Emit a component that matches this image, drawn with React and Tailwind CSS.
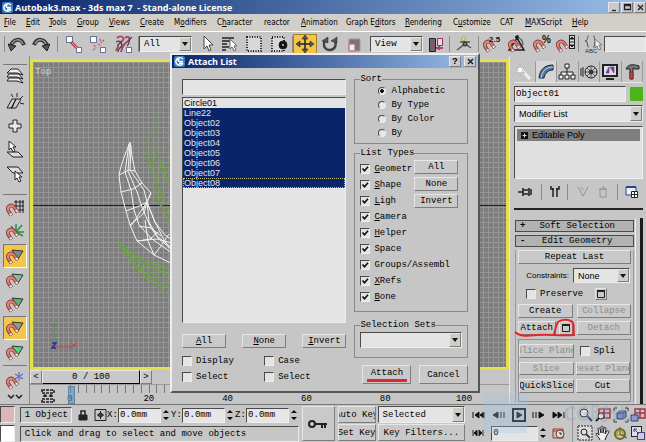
import React from 'react';
import clsx from 'clsx';

const mono = "font-['Liberation_Mono',monospace] text-[9px] leading-[12px]";
const raised = 'border border-t-[#e6e6e6] border-l-[#e6e6e6] border-b-[#7d7d7d] border-r-[#7d7d7d]';
const sunken = 'border border-t-[#4a4a4a] border-l-[#4a4a4a] border-b-[#ededed] border-r-[#ededed]';

const Btn = ({ children, className, disabled, label }) => (
  <button
    aria-label={label}
    disabled={disabled}
    className={clsx('flex items-center justify-center overflow-hidden whitespace-nowrap bg-[#c9c9c9]', raised, disabled && 'text-[#8c8c8c]', className)}
  >
    {children}
  </button>
);

const Field = ({ label, className, value = '' }) => (
  <input aria-label={label} defaultValue={value} className={clsx('min-w-0 bg-[#e4e4e4] px-px outline-none', sunken, className)} />
);

const Select = ({ label, options, className }) => (
  <div className={clsx('relative flex bg-[#e4e4e4]', sunken, className)}>
    <select aria-label={label} className="w-full appearance-none bg-transparent pl-1 pr-3 outline-none">
      {options.map((o) => <option key={o}>{o}</option>)}
    </select>
    <span className={clsx('pointer-events-none absolute inset-y-0 right-0 flex w-3 items-center justify-center bg-[#cfcdc8]', raised)}>
      <svg width="6" height="4" viewBox="0 0 6 4"><path d="M0 0h6L3 4z" fill="#111" /></svg>
    </span>
  </div>
);

const Check = ({ children, checked, hot, className }) => (
  <label className={clsx('flex items-center gap-1', className)}>
    <span className="relative flex h-[10px] w-[10px] shrink-0">
      <input type="checkbox" defaultChecked={checked} className={clsx('peer h-[10px] w-[10px] appearance-none bg-[#e4e4e4]', sunken)} />
      <svg className="pointer-events-none absolute inset-0 hidden peer-checked:block" width="10" height="10" viewBox="0 0 10 10">
        <path d="M2.5 4.5l2 2.2L8 2.8" fill="none" stroke="#111" strokeWidth="1.7" />
      </svg>
    </span>
    <span className="block overflow-hidden whitespace-nowrap">{hot ? <Hot text={children} at={0} /> : children}</span>
  </label>
);

// underlined accelerator letter
const Hot = ({ text, at }) => (
  <span>{text.slice(0, at)}<u className="underline-offset-1">{text[at]}</u>{text.slice(at + 1)}</span>
);

const Icon = ({ w = 18, h = 18, children, className }) => (
  <svg width={w} height={h} viewBox={`0 0 ${w} ${h}`} fill="none" stroke="#222" className={clsx('shrink-0', className)}>{children}</svg>
);

const Logo = () => (
  <svg width="11" height="11" viewBox="0 0 11 11" className="shrink-0">
    <rect width="11" height="11" rx="2" fill="#3c7dbb" />
    <path d="M9 3C7 .8 2 1.200 1.800 5.500 2 9.500 7.500 10.300 9.200 7.500M9 5.500H5.500c-2-.2-2-2.300 0-2.300M5 7.300h4" fill="none" stroke="#fff" strokeWidth="1.400" />
  </svg>
);

const Magnet = ({ x = 0, y = 0 }) => (
  <g transform={`translate(${x} ${y})`} fill="none">
    <path d="M5.500 12.500L2.500 8C0 3.500 5.500 .5 8 4l3.500 5" stroke="#6a3430" strokeWidth="3.600" />
    <path d="M5.200 12L2.500 8C0 3.500 5.500 .5 8 4l3.200 4.500" stroke="#dc7268" strokeWidth="2.200" />
    <path d="M2 7C1 4 4.500 2 6.500 3.500" stroke="#efb0a6" strokeWidth=".8" />
    <path d="M4.300 10.700l1 1.400M10.200 7.200l1 1.400" stroke="#f2f2f2" strokeWidth="2.400" />
  </g>
);

const Sep = () => <span className="h-4 w-px shrink-0 bg-[#8b8b8b]" />;

const TitleBar = () => (
  <header className="flex h-[14px] items-center gap-[2px] bg-linear-to-r from-[#0a246a] to-[#9cbfe8] pl-[2px]">
    <Logo />
    <h1 className="grow whitespace-pre font-['Open_Sans',sans-serif] text-[9px] font-bold leading-[13px] text-white">
      {'Autobak3.max - 3ds max 7  - Stand-alone License'}
    </h1>
    <div className="flex gap-px">
      {['M2 7.500h4', 'M1.500 1.500h6v5h-6zM1.500 2.500h6', 'M2 2l5 5M7 2L2 7'].map((d, i) => (
        <Btn key={d} label={['Minimize', 'Maximize', 'Close'][i]} className="h-[11px] w-3">
          <Icon w={9} h={9}><path d={d} strokeWidth="1.300" /></Icon>
        </Btn>
      ))}
    </div>
  </header>
);

const menus = [
  ['File', 0, 'w-[22px]'], ['Edit', 0, 'w-[23px]'], ['Tools', 0, 'w-[28px]'], ['Group', 0, 'w-[32px]'], ['Views', 0, 'w-[31px]'],
  ['Create', 0, 'w-[34px]'], ['Modifiers', 1, 'w-[43px]'], ['Character', 1, 'w-[47px]'], ['reactor', -1, 'w-[37px]'], ['Animation', 0, 'w-[45px]'],
  ['Graph Editors', 7, 'w-[59px]'], ['Rendering', 0, 'w-[48px]'], ['Customize', 1, 'w-[47px]'], ['CAT', -1, 'w-[25px]'], ['MAXScript', 0, 'w-[47px]'], ['Help', 0, 'w-[22px]'],
];

const MenuBar = () => (
  <nav className="flex h-[17px] items-center bg-[#d2cfc9] pl-1 font-['DejaVu_Sans_Condensed','DejaVu_Sans',sans-serif] text-[8px] leading-[12px]">
    {menus.map(([name, at, w]) => (
      <button key={name} className={clsx('shrink-0 whitespace-nowrap text-left', w)}>
        {at < 0 ? name : <Hot text={name} at={at} />}
      </button>
    ))}
  </nav>
);

const Tool = ({ label, children, className }) => (
  <button aria-label={label} className={clsx('flex h-5 shrink-0 items-center justify-center', className)}>{children}</button>
);

const Toolbar = () => (
  <div className={clsx('flex h-[25px] items-center border-t border-white bg-[#c6c6c6] pl-1', mono)}>
    <Sep />
    <Tool label="Undo" className="w-6"><Icon><path d="M3 11C5 4 13 2 16 10" stroke="#333" strokeWidth="4" /><path d="M4 9C6 4 12 3 15 9" stroke="#999" strokeWidth="1.500" /><path d="M0 9l8 2-5 5z" fill="#555" /></Icon></Tool>
    <Tool label="Redo" className="w-6"><Icon><path d="M15 11C13 4 5 2 2 10" stroke="#333" strokeWidth="4" /><path d="M14 9C12 4 6 3 3 9" stroke="#999" strokeWidth="1.500" /><path d="M18 9l-8 2 5 5z" fill="#555" /></Icon></Tool>
    <span className="w-1" /><Sep />
    <Tool label="Link" className="ml-1 w-6">
      <Icon><rect x="1.500" y="1.500" width="6" height="6" fill="#fff" stroke="#679" /><rect x="11.500" y="12.500" width="5" height="5" fill="#fff" stroke="#679" /><path d="M6 7l3 3M8 9l4 4" stroke="#b0404c" strokeWidth="3" /><path d="M7 8l5 5" stroke="#e0a0a0" /></Icon>
    </Tool>
    <Tool label="Unlink" className="w-6">
      <Icon><rect x="1.500" y="1.500" width="6" height="6" fill="#fff" stroke="#679" /><rect x="11.500" y="12.500" width="5" height="5" fill="#fff" stroke="#679" /><path d="M5 10l2 3M4 15l3-2M11 4l1 3M15 5l-3 3M9 9l3 2" stroke="#c06068" strokeWidth="1.500" strokeDasharray="2 1" /></Icon>
    </Tool>
    <Tool label="Bind to Space Warp" className="w-7">
      <Icon><path d="M2 3c3-3 8-1 6 2S2 8 3 12l-2 4M10 3c4-3 6 1 3 3s-6 5-7 11" stroke="#b03c50" strokeWidth="1.800" /><path d="M1 7c5-3 7 3 5 5s-3 2-3 5M17 2c-5 3-1 6-5 9" stroke="#33406c" strokeWidth="1.300" /><rect x="11.500" y="12.500" width="5" height="5" fill="#fff" stroke="#679" /></Icon>
    </Tool>
    <Sep />
    <Select label="Selection filter" options={['All']} className="h-4 w-[53px]" />
    <Tool label="Select" className="ml-1 w-[22px]"><Icon w={12}><path d="M3 1v13l3-3 2 5 2-1-2-5h4z" fill="#fff" stroke="#444" /></Icon></Tool>
    <Tool label="Select by Name" className="w-6"><Icon><path d="M1 3h12M1 6h8M1 9h5M1 12h7M1 15h4" strokeWidth="1.500" /><path d="M9 4v10l2-2 2 4 2-1-2-4h3z" fill="#fff" stroke="#666" /></Icon></Tool>
    <Tool label="Region" className="w-6"><Icon><rect x="2" y="2" width="14" height="14" fill="#d8d8d8" strokeWidth="2" strokeDasharray="1 1.500" /></Icon></Tool>
    <Tool label="Window Crossing" className="w-[26px]"><Icon><rect x="2" y="2" width="12" height="14" fill="#d8d8d8" strokeWidth="2" strokeDasharray="1 1.500" /><circle cx="13" cy="10" r="4" fill="#111" /><circle cx="13" cy="10" r="1" fill="#ccc" stroke="none" /></Icon></Tool>
    <Sep />
    <Tool label="Move" className="w-6 border border-[#a08020] bg-[#f3c648]">
      <Icon><path d="M9 3v12M3 9h12" strokeWidth="1.500" /><path d="M9 0l3 4H6zM9 18l3-4H6zM0 9l4-3v6zM18 9l-4-3v6z" fill="#555" strokeWidth=".6" /></Icon>
    </Tool>
    <Tool label="Rotate" className="w-[25px]"><Icon><path d="M4 5C1 12 5 15 9 15s8-5 4-10" stroke="#444" strokeWidth="2.500" /><path d="M1 6l6-4v6zM10 6l6-4v6z" fill="#555" strokeWidth=".5" /></Icon></Tool>
    <Tool label="Scale" className="w-6"><Icon><path d="M4 4h11v12H4z" fill="#777" stroke="#999" /><path d="M4 9h6v7H4z" fill="#f4e8ea" stroke="#b06070" /></Icon></Tool>
    <Select label="Reference coordinate system" options={['View']} className="ml-1 h-4 w-[53px]" />
    <Tool label="Pivot center" className="w-[26px]"><Icon><path d="M2.500 3.500h6v13h-6z" fill="#667" /><path d="M10.500 3.500h5v7h-5z" fill="#dde" stroke="#a03050" /><path d="M4 10h4M9 13h7M12 11v4" stroke="#b04060" strokeWidth="2" /></Icon></Tool>
    <Sep />
    <Tool label="Manipulate" className="w-7"><Icon><path d="M2 15l8-6 6 4M10 9l-2-5M5 7h10" stroke="#555" strokeWidth="1.500" /><path d="M6 3l3-2 2 3-3 2z" fill="#f0dc40" stroke="#aa8" /><circle cx="10" cy="9" r="2" fill="#777" /></Icon></Tool>
    <Sep />
    <Tool label="Snap 2.5" className="w-[25px]"><Icon w={20}><Magnet x={1} y={4} /><text x="7" y="7" fontSize="8" fontWeight="bold" fill="#111" stroke="none" fontFamily="Liberation Sans">2.5</text></Icon></Tool>
    <Tool label="Angle snap" className="w-[25px]"><Icon w={20}><path d="M2 15h15L10 3z" strokeWidth="1.500" /><path d="M9 2c5 0 7 5 7 8" /><path d="M8 2l3-2v5z" fill="#111" /><Magnet x={1} y={4} /></Icon></Tool>
    <Tool label="Percent snap" className="w-[25px]"><Icon w={20}><Magnet x={1} y={4} /><text x="10" y="8" fontSize="10" fontWeight="bold" fill="#111" stroke="none" fontFamily="Liberation Sans">%</text></Icon></Tool>
    <Tool label="Spinner snap" className="w-[24px]"><Icon w={20}><Magnet x={0} y={4} /><rect x="13.500" y=".5" width="5" height="13" fill="#ddd" /><path d="M14 7h5M14 4l2-2 2 2zM14 10l2 2 2-2z" fill="#111" /></Icon></Tool>
    <Sep />
    <Tool label="Named selection sets" className="ml-1 w-5"><Icon><path d="M5 1C2 1 5 6 1 6c4 0 1 6 4 6M9 1c3 0 0 5 3 5-3 0 0 6-3 6" stroke="#555" /><path d="M11 4v9l2-2 2 4 2-1-2-4h3z" fill="#eee" stroke="#777" /><text x="1" y="18" fontSize="6" fill="#333" stroke="none" fontFamily="Liberation Sans">ABC</text></Icon></Tool>
    <Field label="Selection set name" className="ml-px h-4 w-4 grow" />
  </div>
);

const SnapTool = ({ label, active, color }) => (
  <button aria-label={label} className={clsx('flex h-6 w-6 items-center justify-center', active && 'border border-t-[#777] border-l-[#777] border-b-white border-r-white bg-[#f5c64c]')}>
    <Icon>
      <path d="M6 3l11 1-5 8z" fill={color} stroke="#2c3a34" />
      <Magnet x={0} y={4} />
    </Icon>
  </button>
);

const LeftTools = () => (
  <aside className="flex w-[30px] shrink-0 flex-col items-center border-r border-[#8a8a8a] bg-[#c6c6c6] pt-2">
    <span className="h-px w-6 bg-[#777]" />
    <button aria-label="Layers" className="flex h-6 items-center"><Icon><path d="M1 14h10l6 2-4-5H3zM1 10h10l6 2-4-5H3zM1 6h10l6 2-5-6H5z" fill="#eee" transform="translate(0 -1)" /></Icon></button>
    <button aria-label="Layer properties" className="flex h-[25px] items-center"><Icon><path d="M1 15l5-9h4l-4 9zM5 15l5-9h5l-5 9z" fill="#ccc" /><path d="M5 1l2 3M11 0v4M17 3l-3 3M14 10l4 1" /></Icon></button>
    <button aria-label="Add" className="flex h-6 items-center"><Icon><path d="M7 3h4v4h4v4h-4v4H7v-4H3V7h4z" fill="#e8e8e8" /></Icon></button>
    <button aria-label="Select from layer" className="flex h-6 items-center"><Icon><path d="M1 11h11l5 5H7z" fill="#ddd" /><path d="M3 0v9l2-2 2 4 2-1-2-4h3z" fill="#fff" /></Icon></button>
    <button aria-label="Move to layer" className="flex h-6 items-center"><Icon><path d="M1 2h11l5 6H7z" fill="#ddd" /><path d="M9 6v9l2-2 2 4 2-1-2-4h3z" fill="#fff" /></Icon></button>
    <span className="mt-2 h-px w-6 bg-[#777]" />
    <button aria-label="Grid snap" className="mt-px flex h-6 items-center"><Icon><path d="M8 3h10M7 7h11M8 11h10M10 1v13M14 1v13M17 1v13" /><Magnet x={0} y={4} /></Icon></button>
    <button aria-label="Pivot snap" className="flex h-6 items-center"><Icon><path d="M10 9V1M10 9L5 3M10 9l6-7M10 9h8M10 9l7 4" stroke="#2c8c4c" strokeWidth="1.500" /><Magnet x={0} y={4} /></Icon></button>
    <SnapTool label="Vertex snap" active color="#7c8c88" />
    <SnapTool label="Endpoint snap" color="#90b8a0" />
    <SnapTool label="Midpoint snap" color="#60b080" />
    <SnapTool label="Edge snap" active color="#8aa088" />
    <SnapTool label="Face snap" color="#50d880" />
    <span className="mt-px h-px w-6 bg-[#777]" />
    <button aria-label="Freeze snap" className="flex h-7 items-center"><Icon><path d="M13 1v9M9 3l8 5M17 3L9 8" stroke="#6a70c8" strokeWidth="1.300" /><Magnet x={0} y={5} /></Icon></button>
    <Icon w={16} h={5}><path d="M1 1l3 3 3-3M9 1l3 3 3-3" strokeWidth="1.500" /></Icon>
  </aside>
);

const Viewport = () => (
  <div className="relative grow overflow-hidden border-[3px] border-[#e3e04a] bg-[#7d7d7d] bg-[linear-gradient(#969696_1px,transparent_1px),linear-gradient(90deg,#969696_1px,transparent_1px)] bg-size-[5px_5px]">
    <span className={clsx('ml-[2px] mt-1 block text-[#d0d0d0]', mono)}>Top</span>
    <span className="absolute inset-x-0 top-[143px] h-px bg-[#222]" />
    <svg width="140" height="306" viewBox="33 62 140 306" className="absolute left-0 top-0" fill="none">
      <g stroke="#69a53c" strokeDasharray="3 2">
        <path d="M172 100c-18 14-29 40-27 62M172 108c-14 12-24 34-23 58M172 124c-12 10-18 25-18 45M172 142c-8 8-13 18-12 32M172 160c-5 5-8 12-7 22" />
        <path d="M151 152l10 45M148 160l22 52M156 150l16 40M152 185l20 40M160 165l12 25M156 196l16 34" strokeWidth="1.500" />
        <path d="M119 241c10 22 28 40 53 56M119 243c14 14 32 25 53 33M121 247c13 21 30 32 51 41M124 247c14 10 30 19 48 21" strokeWidth="2" />
        <path d="M128 252l6 14M135 256l10 19M145 262l8 22M155 266l6 22M164 270l4 22M136 262l34 8M140 268l32 15" />
      </g>
      <g stroke="#f2f2f2">
        <path d="M130 142c-5 13-9 22-11 33l2 17 5 19 4 14 7 16 17 14 19 9" />
        <path d="M130 142l2 14 3 15 7 12 9 10-4 9 2 20 8 14 15 12" />
        <path d="M129 144l-4 28 6 18 3 20 5 15 13 14 20 14M130 144l-2 27 9 21 6 18 8 18 7 10 14 12M131 145l-1 25 14 20 3 12 8 20 9 12 8 6" />
        <path d="M119 175l10-5 6 1M121 192l12-3 9-6M126 211l13-5 8-4M130 225l14-12 3-11M137 241l13-2 8-7M154 255l7-9 8-12M147 202l7 18 10 20 8 11M147 202l-16 24M151 193l-8 17M137 241l20-2 15 4" />
        <path d="M139 226l12 2 10 8M145 220l3 21 6 14" />
      </g>
      <path d="M54 345v-20M51 326l3-2 3 2" stroke="#3e9a48" />
      <path d="M54 347h20M71 342l6 6M77 342l-6 6" stroke="#c0483c" />
      <path d="M52 343h4l-4 5h4" stroke="#2a2a9c" strokeWidth="1.500" />
    </svg>
  </div>
);

const TimeLine = () => (
  <div className={clsx('h-[34px] bg-[#c6c6c6]', mono)}>
    <div className="flex h-[14px] w-[122px]">
      <Btn label="Previous frame" className="w-3">&lt;</Btn>
      <Btn className="grow border-b-black border-r-black text-[9px]">0 / 100</Btn>
      <Btn label="Next frame" className="w-3">&gt;</Btn>
    </div>
    <div className="flex h-5 border-t border-[#999]">
      <div className="flex w-10 justify-center pt-1 pr-1">
        <Icon w={14} h={14}><path d="M1 1h12v3H1zM1 13h12v-3H1z" strokeDasharray="3 1" strokeWidth="1.500" /><path d="M4 5v3M10 5v3M2 7h4M8 7h4" strokeWidth="1.500" /></Icon>
      </div>
      <div className="relative mr-[45px] grow">
        <div className="flex justify-between">
          {Array.from({ length: 51 }, (_, i) => <span key={i} className="h-[8px] w-px bg-[#777]" />)}
        </div>
        <div className="flex justify-between text-[9px]">
          {[0, 20, 40, 60, 80, 100].map((n) => <span key={n} className="flex w-0 justify-center leading-[12px]">{n}</span>)}
        </div>
        <span className="absolute -left-[2px] top-px h-[18px] w-[7px] border border-[#5d86a8] bg-[#5b93c0]/60" />
      </div>
    </div>
  </div>
);

const tabIcons = [
  ['Create', <><path d="M7 7l8 9" stroke="#eee" strokeWidth="3" /><path d="M5 1l1 4 4-1-3 3 3 3-4-1-1 4-1-4-4 1 3-3L1 4l3 1z" fill="#fff" stroke="#bbb" /></>],
  ['Modify', <><path d="M2 15C3 6 8 2 16 2v5C11 7 8 10 7 15z" fill="#4a78a8" /><path d="M4 15C5 8 9 4 16 4" stroke="#cde" /></>],
  ['Hierarchy', <><path d="M7 1h4v4H7zM1 12h4v4H1zM7 12h4v4H7zM13 12h4v4h-4zM9 5v7M3 12V9h12v3" fill="#eee" /></>],
  ['Motion', <><circle cx="11" cy="9" r="6" /><circle cx="11" cy="9" r="2" fill="#999" /><path d="M11 3v12M5 9h12M7 5l8 8M15 5l-8 8" strokeWidth=".6" /><path d="M1 5v8M3 4v10" /></>],
  ['Display', <><rect x="2" y="2" width="14" height="11" fill="#dde" strokeWidth="2" /><path d="M5 10l3-6v6zM9 4h4v6z" fill="#bb3040" stroke="#4050a0" strokeWidth=".7" /><path d="M5 16h8" strokeWidth="2" /></>],
  ['Utilities', <><path d="M3 6c2-5 7-5 13-3v3h-4l-2-1v11H7V6z" fill="#777" /><path d="M7 9h3v7H7z" fill="#c04838" stroke="#733" /></>],
];

const WinIcon = () => <Icon w={8} h={8}><path d="M.5 1.500h7v6h-7z" /><path d="M0 1h8" strokeWidth="2" /></Icon>;

const CommandPanel = () => (
  <aside className={clsx('flex w-[137px] shrink-0 flex-col border-l border-[#e8e8e8] bg-[#c6c6c6] pl-1 pr-[3px] pt-[5px]', mono)}>
    <div className="flex h-[22px] items-center justify-between border-b border-[#e8e8e8]">
      {tabIcons.map(([name, art], i) => (
        <button key={name} aria-label={name} className={clsx('flex h-[21px] grow items-center justify-center border-r border-[#999]', i === 1 && 'bg-[#d6d6d6]')}>
          <Icon>{art}</Icon>
        </button>
      ))}
    </div>
    <div className="mt-[3px] flex items-center gap-1">
      <Field label="Object name" value="Object01" className="h-4 grow" />
      <button aria-label="Object color" className="h-[14px] w-[14px] bg-[#4cb318]" />
    </div>
    <Select label="Modifier List" options={['Modifier List']} className="mt-[3px] h-[17px] font-['Liberation_Sans',sans-serif]" />
    <ul className={clsx("mt-1 h-[53px] bg-[#e0e0e0] p-[2px] font-['Liberation_Sans',sans-serif]", sunken)}>
      <li className="flex h-3 items-center gap-1 bg-[#7e7e7e] pl-1">
        <Icon w={7} h={7}><path d="M0 0h7v7H0z" fill="#111" stroke="none" /><path d="M1.500 3.500h4M3.500 1.500v4" stroke="#ddd" /></Icon>
        Editable Poly
      </li>
    </ul>
    <div className="flex h-[29px] items-center justify-between px-1 pb-1">
      <Icon w={16}><path d="M0 9h5M5 5v8M5 7h6M5 11h6M11 5v8M13 6v6" strokeWidth="1.500" /></Icon><Sep />
      <Icon w={10}><path d="M1 3v3h3M9 3v3H6M3 5v9M7 5v9" strokeWidth="1.500" /></Icon><Sep />
      <Icon w={14}><path d="M2 4l5 9 5-9M5 4l2 3" stroke="#949494" /></Icon>
      <Icon w={12}><path d="M3 6h6v8H3zM2 6h8M5 3l3 2" stroke="#949494" /></Icon><Sep />
      <Icon w={14}><path d="M1 4h10v8H1z" fill="#eee" stroke="#224a94" /><path d="M1 4h10" stroke="#224a94" strokeWidth="2" /><path d="M6.500 8.500h6v6h-6zM6 11.500h7M9.500 8v7" fill="#fff" /></Icon>
    </div>
    <div className="h-[2px] bg-[#222]" />
    <div className="mt-2 flex grow border-r-[3px] border-[#1c1c1c] pr-1">
      <div className="flex min-w-0 grow flex-col gap-[3px] border-r border-[#eee] pl-px pr-px pt-[2px]">
        {[['+', 'Soft Selection'], ['-', 'Edit Geometry']].map(([s, t]) => (
          <button key={t} className="flex h-3 items-center border border-[#4a4a4a] bg-[#b2b2b2] px-1 leading-[10px]">
            <b>{s}</b><span className="grow text-center">{t}</span>
          </button>
        ))}
        <div className="flex flex-col gap-1 border-x border-[#9a9a9a] px-[2px]">
          <Btn className="h-[14px]">Repeat Last</Btn>
          <div className="flex items-center justify-end gap-1 pr-px">
            <span className="font-['Liberation_Sans',sans-serif] text-[8px]">Constraints:</span>
            <Select label="Constraints" options={['None']} className="h-[15px] w-[57px] font-['Liberation_Sans',sans-serif]" />
          </div>
          <div className="flex h-[13px] items-center justify-between pl-2 pr-6">
            <Check>Preserve</Check>
            <Btn label="Preserve settings" className="h-3 w-3"><WinIcon /></Btn>
          </div>
          <div className="grid grid-cols-2 gap-x-1 gap-y-[3px]">
            <Btn className="h-[14px]">Create</Btn>
            <Btn disabled className="h-[14px]">Collapse</Btn>
            <div className="relative flex gap-[3px]">
              <Btn className="h-[14px] grow">Attach</Btn>
              <Btn label="Attach list" className="h-[14px] w-[14px]"><WinIcon /></Btn>
              <svg width="66" height="22" viewBox="0 0 66 22" className="pointer-events-none absolute -left-1 -top-[3px]" fill="none" stroke="#e3262a" strokeWidth="2">
                <path d="M1 14c5 5 13 4 22 3 12-1 22 1 37 0-1-7 1-12-3-14-5-2-9-2-13 1-2 3-3 8-4 13" />
              </svg>
            </div>
            <Btn disabled className="h-[14px]">Detach</Btn>
          </div>
          <div className="grid grid-cols-2 gap-x-[2px] gap-y-[4px] border border-[#8c8c8c] pt-1 pb-2">
            <Btn disabled className="h-[14px]">Slice Plane</Btn>
            <Check className="pl-1">Spli</Check>
            <Btn disabled className="h-[13px]">Slice</Btn>
            <Btn disabled className="h-[13px]">Reset Plane</Btn>
            <Btn className="h-[14px]">QuickSlice</Btn>
            <Btn className="h-[14px]">Cut</Btn>
          </div>
        </div>
      </div>
    </div>
  </aside>
);

const Spinner = () => (
  <Icon w={8} h={14} className="mx-px"><path d="M1 5l3-3 3 3zM1 9l3 3 3-3z" fill="#111" stroke="none" /></Icon>
);

const playIcons = [
  ['Go to Start', 'M2 5v6M8 5L4 8l4 3zM13 5L9 8l4 3z'],
  ['Previous Frame', 'M7 5L2 8l5 3zM10 5v6M13 5v6'],
  ['Play', 'M6 5v6l5-3z'],
  ['Next Frame', 'M9 5l5 3-5 3zM3 5v6M6 5v6'],
  ['Go to End', 'M14 5v6M8 5l4 3-4 3zM3 5l4 3-4 3z'],
];

const navIcons = [
  ['Zoom', <><circle cx="7" cy="6" r="4" fill="#ddd" stroke="#334" /><path d="M10 9l5 5" stroke="#346" strokeWidth="2" /></>],
  ['Zoom All', <><path d="M4 2h11v9H4zM4 6h11M9 2v9" stroke="#a03848" strokeWidth="1.500" /><circle cx="6" cy="9" r="3" fill="#ddd" /><path d="M4 11l-3 3" strokeWidth="2" /></>],
  ['Zoom Extents', <><path d="M4 6l3-2h6v6l-3 2H4zM4 6h6v6M10 6l3-2" fill="#7c8cc8" stroke="#346" /><path d="M1 4V1h3M12 1h3v3M1 12v3h3M12 15h3v-3" /></>],
  ['Zoom Extents All', <><path d="M5 2h10v9H5zM5 6h10M10 2v9" stroke="#a03848" strokeWidth="1.500" /><path d="M1 8h7v6H1z" fill="#8c9cd0" stroke="#346" /></>],
  ['Region Zoom', <><rect x="1" y="1" width="14" height="14" strokeDasharray="2 1" fill="#ddd" /><circle cx="7" cy="7" r="3" /><path d="M9 9l4 4" stroke="#346" strokeWidth="2" /></>],
  ['Pan', <path d="M5 15c-1-3-4-5-4-6s2-1 3 1L3 4c0-2 2-1 2 0l1 4V2c1-2 2-1 2 0v6l1-5c1-1 2-1 2 1l-1 5 2-3c1-1 2 0 2 1-2 3-3 5-4 8" fill="#f0f0f0" />],
  ['Arc Rotate', <><circle cx="7" cy="9" r="5" stroke="#776a10" strokeWidth="2" /><path d="M7 3l4 7H3z" fill="#e8d838" stroke="#886" /><path d="M7 9V2M7 9l7 4" stroke="#443" /></>],
  ['Maximize Viewport', <><rect x="1.500" y="1.500" width="10" height="10" fill="#ddd" stroke="#224" /><rect x="7.500" y="7.500" width="7" height="7" fill="#ccd" stroke="#448" /><path d="M4 4l5 5M4 4h3M4 4v3" stroke="#448" /></>],
];

const StatusBar = () => (
  <footer className={clsx('relative flex h-[38px] gap-[2px] border-t border-[#777] bg-[#c6c6c6] pt-px', mono)}>
    <div className="flex w-[15px] flex-col gap-[2px]">
      <span className={clsx('h-[17px] bg-[#ddb4b9]', sunken)} />
      <span className={clsx('h-[17px] bg-white', sunken)} />
    </div>
    <div className="ml-[3px] flex w-[284px] flex-col gap-[2px]">
      <div className="flex h-[18px] items-center">
        <span className={clsx('flex h-4 w-[52px] items-center overflow-hidden whitespace-nowrap pl-1', sunken)}>1 Object</span>
        <Icon w={12} h={14} className="mx-[5px]"><path d="M2 7h8v5H2z" fill="#222" /><path d="M4 7V3h4v4" strokeWidth="1.500" /></Icon>
        <Icon w={13} h={14}><path d="M1 1.500h11v11H1zM6.500 3v8M3 7h7" /><circle cx="6.500" cy="7" r="2" fill="#444" /></Icon>
        <span className="grow" />
        {['X', 'Y', 'Z'].map((axis) => (
          <label key={axis} className="flex items-center whitespace-nowrap">
            <span className="w-[11px]">{axis}:</span>
            <input defaultValue="0.0mm" className={clsx('h-[15px] w-[43px] bg-[#e6e6e6] px-px outline-none', sunken)} />
            <Spinner />
          </label>
        ))}
      </div>
      <p className={clsx('flex h-[16px] items-center pl-1', sunken)}>Click and drag to select and move objects</p>
    </div>
    <Btn label="Set Keys" className="mx-px h-[35px] w-[33px]">
      <Icon w={20} h={10}><circle cx="4" cy="5" r="3" strokeWidth="2" /><path d="M7 5h12M14 5v4M17 5v4" strokeWidth="2" /></Icon>
    </Btn>
    <div className="flex w-[38px] flex-col gap-px">
      <Btn className="h-[17px]">Auto Key</Btn>
      <Btn className="h-[17px]">Set Key</Btn>
    </div>
    <div className="flex w-[89px] flex-col gap-px">
      <Select label="Key selection" options={['Selected']} className="h-[17px]" />
      <Btn className="h-[17px]">Key Filters...</Btn>
    </div>
    <div className="ml-1 flex grow flex-col justify-around">
      <div className="flex justify-between pr-1">
        {playIcons.map(([name, d]) => (
          <button key={name} aria-label={name}>
            <Icon w={16} h={16}>
              {name === 'Play' && <path d="M2 2h12v12H2z" stroke="#111" strokeWidth="2" />}
              <path d={d} fill="#111" stroke="#111" />
            </Icon>
          </button>
        ))}
      </div>
      <div className="flex items-center">
        <button aria-label="Key mode" className="w-5"><Icon w={14} h={14}><path d="M2 4v6M12 4v6M6 4L3 7l3 3zM8 4l3 3-3 3z" fill="#111" /></Icon></button>
        <Field label="Current frame" value="0" className="h-[15px] w-[47px] grow" />
        <Spinner />
        <button aria-label="Time configuration" className="ml-1 mr-1"><Icon w={14} h={14}><path d="M1 3h10v9H1zM1 5h10" stroke="#933" /><circle cx="8" cy="8" r="4" fill="#ddc" stroke="#733" /><path d="M8 6v2h2" /></Icon></button>
      </div>
    </div>
    <div className="grid grid-cols-4 content-around gap-x-[2px] border-l border-[#999] pl-1">
      {navIcons.map(([name, art]) => (
        <button key={name} aria-label={name}><Icon w={16} h={16}>{art}</Icon></button>
      ))}
    </div>
    <div className="pointer-events-none absolute -top-3 right-4 flex items-center gap-9 whitespace-nowrap font-['Noto_Sans_CJK_SC',sans-serif] text-[20px] font-bold leading-[32px] text-[#8ea8c0]/40">
      <span className="h-10 w-11 bg-[#9cc4e4]/30" />
      CG时代
    </div>
  </footer>
);

const Group = ({ title, children, className }) => (
  <fieldset className={clsx('min-w-0 border border-[#8a8a8a] px-[5px]', className)}>
    <legend className="leading-[10px]">{title}</legend>
    {children}
  </fieldset>
);

const objects = ['Circle01', 'Line22', 'Object02', 'Object03', 'Object04', 'Object05', 'Object06', 'Object07', 'Object08'];
const types = [
  ['Geometr', 'w-[52px]', 1], ['Shape', 'w-[52px]', 1], ['Ligh', 'w-[52px]', 1], ['Camera', 'w-[52px]', 1], ['Helper', 'w-[52px]', 1],
  ['Space', 'w-[52px]', 0], ['Groups/Assembl', 'w-[90px]', 0], ['XRefs', 'w-[52px]', 1], ['Bone', 'w-[52px]', 1],
];

const AttachList = () => (
  <section role="dialog" aria-label="Attach List" className={clsx('absolute left-[170px] top-[53px] w-[310px] border-2 border-t-[#eee] border-l-[#eee] border-b-[#555] border-r-[#555] bg-[#c6c6c6]', mono)}>
    <header className="flex h-[13px] items-center gap-[3px] bg-linear-to-r from-[#0a246a] to-[#9cbfe8] px-[2px]">
      <Logo />
      <h2 className="grow font-['Open_Sans',sans-serif] text-[9px] font-bold text-white">Attach List</h2>
      <Btn label="Help" className="h-[11px] w-3 font-bold">?</Btn>
      <Btn label="Close" className="h-[11px] w-3"><Icon w={9} h={9}><path d="M2 2l5 5M7 2L2 7" strokeWidth="1.500" /></Icon></Btn>
    </header>
    <div className="flex gap-2 px-[10px] pt-[11px] pb-[7px]">
      <div className="flex w-[165px] flex-col">
        <Field label="Find object" className="h-4" />
        <ul className={clsx("mt-[2px] h-[226px] bg-[#e4e4e4] font-['Liberation_Sans',sans-serif] leading-[10px]", sunken)}>
          {objects.map((o, i) => (
            <li key={o} className={clsx('h-[10px] pl-px', i > 0 && 'bg-[#0a246a] text-[#e6e6e6]', i === 8 && 'outline-1 -outline-offset-1 outline-dotted outline-[#c8c080]')}>{o}</li>
          ))}
        </ul>
        <div className="mt-[11px] flex justify-between">
          {['All', 'None', 'Invert'].map((t) => <Btn key={t} className="h-[14px] w-11"><Hot text={t} at={0} /></Btn>)}
        </div>
        <div className="mt-[7px] grid grid-cols-2 gap-y-1">
          {['Display', 'Case', 'Select', 'Select'].map((t, i) => <Check key={i}>{t}</Check>)}
        </div>
      </div>
      <div className="flex w-[114px] flex-col">
        <Group title="Sort" className="-mt-[5px] h-[70px]">
          <div className="flex flex-col gap-[2px] pl-[18px] pt-px">
            {['Alphabetic', 'By Type', 'By Color', 'By'].map((t, i) => (
              <label key={t} className="flex items-center gap-[5px]">
                <input type="radio" name="sort" defaultChecked={i === 0} className={clsx('h-2 w-2 appearance-none rounded-full bg-[#e6e6e6] checked:bg-[radial-gradient(#111_40%,#e6e6e6_50%)]', sunken)} />
                {t}
              </label>
            ))}
          </div>
        </Group>
        <Group title="List Types" className="mt-1 h-[164px]">
          <div className="flex">
            <div className="flex w-[54px] flex-col gap-1 pt-[5px]">
              {types.map(([t, w, hot]) => <Check key={t} checked hot={!!hot} className={w}>{t}</Check>)}
            </div>
            <div className="flex flex-col gap-[3px] pt-[2px]">
              {['All', 'None', 'Invert'].map((t) => <Btn key={t} className="h-[14px] w-[44px]">{t}</Btn>)}
            </div>
          </div>
        </Group>
        <Group title="Selection Sets" className="mt-2 h-[38px]">
          <Select label="Selection Sets" options={['']} className="mt-[2px] h-4" />
        </Group>
        <div className="mt-[7px] flex justify-between pl-2">
          <Btn className="h-[19px] w-[49px]">
            <span className="border-b-[3px] border-[#e3262a] px-1 leading-[11px]">Attach</span>
          </Btn>
          <Btn className="h-[19px] w-[49px]">Cancel</Btn>
        </div>
      </div>
    </div>
  </section>
);

export default function App() {
  return (
    <div className="relative flex min-h-screen flex-col overflow-hidden bg-[#c6c6c6] text-black">
      <TitleBar />
      <MenuBar />
      <Toolbar />
      <main className="flex grow">
        <LeftTools />
        <div className="flex min-w-0 grow flex-col pt-[3px]">
          <Viewport />
          <TimeLine />
        </div>
        <CommandPanel />
      </main>
      <StatusBar />
      <AttachList />
    </div>
  );
}
